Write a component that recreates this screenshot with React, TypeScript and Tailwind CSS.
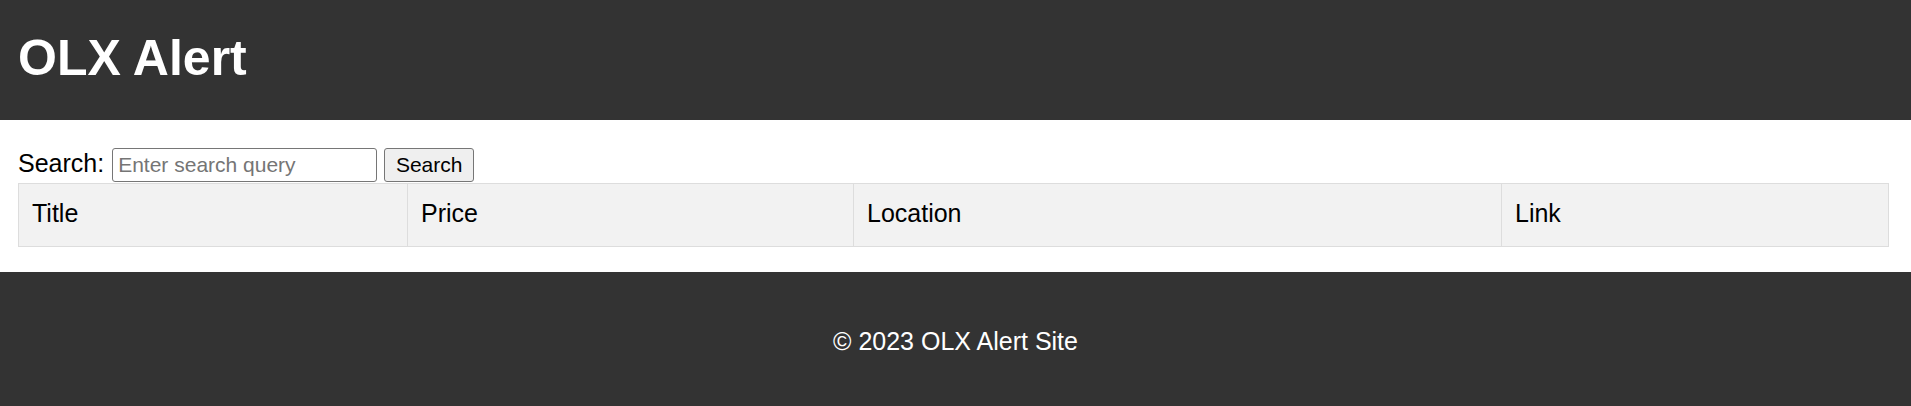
import React from "react";

const columns = [
  { label: "Title", width: "w-[389px]" },
  { label: "Price", width: "w-[446px]" },
  { label: "Location", width: "w-[648px]" },
  { label: "Link", width: "w-[387px]" },
];

const App: React.FC = () => {
  return (
    <div className="min-h-screen flex flex-col bg-white text-[25px] text-black font-['Liberation_Sans',Arial,sans-serif]">
      {/* header */}
      <header className="h-[120px] bg-[#333333] text-white px-[18px] pt-[30px]">
        <h1 className="text-[50px] font-bold leading-[57px]">OLX Alert</h1>
      </header>

      <main className="px-[18px] pt-[28px] pb-[25px]">
        <form
          className="flex items-baseline h-[35px]"
          onSubmit={(e) => e.preventDefault()}
        >
          <label htmlFor="q" className="leading-[29px] mr-[8px]">
            Search:
          </label>
          <input
            id="q"
            type="text"
            placeholder="Enter search query"
            className="w-[265px] h-[34px] border border-[#767676] rounded-[3px] px-[5px] text-[21px] placeholder:text-[#757575] outline-none"
          />
          <button
            type="submit"
            className="ml-[7px] w-[90px] h-[34px] border border-[#767676] rounded-[3px] bg-[#efefef] text-[21px]"
          >
            Search
          </button>
        </form>

        <table className="w-[1870px] border-collapse table-fixed">
          <thead>
            <tr className="bg-[#f2f2f2]">
              {columns.map((c) => (
                <th
                  key={c.label}
                  className={`${c.width} h-[63px] border border-[#dddddd] px-[13px] pt-[11px] pb-[14px] text-left font-normal leading-[29px]`}
                >
                  {c.label}
                </th>
              ))}
            </tr>
          </thead>
          <tbody></tbody>
        </table>
      </main>

      <footer className="flex-1 bg-[#333333] text-white text-center pt-[55px] pb-[46px]">
        <p className="leading-[29px]">© 2023 OLX Alert Site</p>
      </footer>
    </div>
  );
};

export default App;
